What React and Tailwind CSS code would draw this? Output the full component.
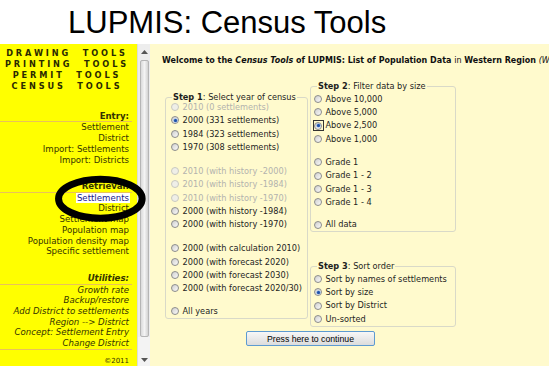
import React from "react";

function Radio({ checked, disabled, focus }) {
  const circle = (
    <span
      className={
        disabled
          ? "relative inline-block w-[8px] h-[8px] rounded-full border border-[#c9c9c0] bg-[#efefe8]"
          : "relative inline-block w-[8px] h-[8px] rounded-full border border-[#8c8c8c] bg-gradient-to-br from-[#cfcfcf] to-[#fbfbfb]"
      }
    >
      {checked && (
        <span className="absolute left-[1.5px] top-[1.5px] w-[3px] h-[3px] rounded-full bg-[#1d4fa8] shadow-[0_0_0_0.6px_#7aa6e0]" />
      )}
    </span>
  );
  if (focus) {
    return (
      <span className="inline-flex items-center justify-center w-[11px] h-[11px] border border-[#333] mr-[2px] -ml-[1.5px]">
        {circle}
      </span>
    );
  }
  return <span className="inline-flex mr-[3.5px]">{circle}</span>;
}

function Row({ label, checked, disabled, focus }) {
  return (
    <div className="flex items-center h-[13.33px] whitespace-nowrap">
      <Radio checked={checked} disabled={disabled} focus={focus} />
      <span className={disabled ? "text-[#b3b3ad]" : "text-[#1e1e1e]"}>{label}</span>
    </div>
  );
}

function Legend({ step, text, className }) {
  return (
    <legend className={"leading-[7px] px-[1px] whitespace-nowrap " + className}>
      <b>Step {step}</b>: {text}
    </legend>
  );
}

export default function App() {
  return (
    <div className="relative w-[549px] h-[366px] overflow-hidden bg-white">
      {/* Header */}
      <div className="h-[44px] bg-white pl-[68px] pt-[6.5px]">
        <div className="font-['Liberation_Sans',Arial,sans-serif] text-[31px] leading-[31px] text-black whitespace-nowrap">
          LUPMIS: Census Tools
        </div>
      </div>

      {/* Body */}
      <div className="flex h-[322px]">
        {/* Sidebar */}
        <div className="w-[137px] bg-[#ffff00] text-[#343400] font-['DejaVu_Sans',Verdana,sans-serif] text-[8.6px] leading-[10.7px]">
          <div className="pt-[3.5px] pr-[3px] text-center font-bold tracking-[2.9px] text-[8.2px] leading-[11.3px] text-[#2a2a00]">
            <div>DRAWING&nbsp; TOOLS</div>
            <div>PRINTING&nbsp; TOOLS</div>
            <div>PERMIT&nbsp; TOOLS</div>
            <div>CENSUS&nbsp; TOOLS</div>
          </div>

          <div className="mt-[18px] text-right">
            <div className="mr-[5px] pr-[3px] font-bold border-b border-[#e9c15a]">Entry:</div>
            <div className="pr-[8px]">Settlement</div>
            <div className="pr-[8px]">District</div>
            <div className="pr-[8px]">Import: Settlements</div>
            <div className="pr-[8px]">Import: Districts</div>
          </div>

          <div className="mt-[15.8px] text-right">
            <div className="mr-[5px] pr-[3px] font-bold border-b border-[#e9c15a]">Retrieval:</div>
            <div className="pr-[7px]">
              <span className="bg-white text-[#1a1a8c] px-[1px]">Settlements</span>
            </div>
            <div className="pr-[8px]">District</div>
            <div className="pr-[8px]">Settlement map</div>
            <div className="pr-[8px]">Population map</div>
            <div className="pr-[8px]">Population density map</div>
            <div className="pr-[8px]">Specific settlement</div>
          </div>

          <div className="mt-[16px] text-right italic">
            <div className="mr-[5px] pr-[3px] font-bold border-b border-[#e9c15a]">Utilities:</div>
            <div className="mr-[5px] pr-[3px] border-b border-[#e9c15a]">
              <div>Growth rate</div>
              <div>Backup/restore</div>
              <div>Add District to settlements</div>
              <div>Region --&gt; District</div>
              <div>Concept: Settlement Entry</div>
              <div>Change District</div>
            </div>
          </div>
          <div className="mt-[7.5px] pr-[8px] text-right text-[7px] leading-[9px]">©2011</div>
        </div>

        {/* Scrollbar */}
        <div className="w-[13px] bg-[#ededed] border-l border-[#dcdcdc] flex flex-col items-center">
          <div className="h-[16px] flex items-center justify-center">
            <svg width="7" height="4" viewBox="0 0 7 4">
              <path d="M0 4 L3.5 0 L7 4 Z" fill="#555" />
            </svg>
          </div>
          <div className="w-[9px] h-[277px] rounded-[2px] border border-[#b5b5b5] bg-gradient-to-r from-[#dadada] via-[#f4f4f4] to-[#d2d2d2]" />
          <div className="flex-1 w-full bg-[#f3f3f3]" />
          <div className="h-[12px] w-full bg-[#f3f3f3] flex items-start justify-center pt-[4px]">
            <svg width="7" height="4" viewBox="0 0 7 4">
              <path d="M0 0 L3.5 4 L7 0 Z" fill="#555" />
            </svg>
          </div>
        </div>

        {/* Main */}
        <div className="flex-1 bg-[#fffacd] overflow-hidden pl-[12px] pt-[12px] font-['DejaVu_Sans',Verdana,sans-serif] text-[8.2px] text-[#1e1e1e]">
          <div className="whitespace-nowrap font-bold text-[8px] leading-[10px] text-[#111]">
            Welcome to the <i>Census Tools</i> of LUPMIS: List of Population Data{" "}
            <span className="font-normal">in</span> Western Region{" "}
            <span className="font-normal italic">(Western)</span>
          </div>

          <div className="mt-[16.5px] ml-[3px] w-[291px]">
            <div className="flex items-start">
              <fieldset className="mt-[11px] w-[143px] border border-[#d9d9c8] rounded-[3px] pl-[5px] pb-0">
                <Legend step="1" text="Select year of census" className="ml-[1px]" />
                <Row label="2010 (0 settlements)" disabled />
                <Row label="2000 (331 settlements)" checked />
                <Row label="1984 (323 settlements)" />
                <Row label="1970 (308 settlements)" />
                <div className="h-[10.67px]" />
                <Row label="2010 (with history -2000)" disabled />
                <Row label="2010 (with history -1984)" disabled />
                <Row label="2010 (with history -1970)" disabled />
                <Row label="2000 (with history -1984)" />
                <Row label="2000 (with history -1970)" />
                <div className="h-[10.67px]" />
                <Row label="2000 (with calculation 2010)" />
                <Row label="2000 (with forecast 2020)" />
                <Row label="2000 (with forecast 2030)" />
                <Row label="2000 (with forecast 2020/30)" />
                <div className="h-[9.7px]" />
                <Row label="All years" />
              </fieldset>

              <div className="ml-[2px] w-[146px]">
                <fieldset className="border border-[#d9d9c8] rounded-[3px] pl-[3px] pt-[2.8px]">
                  <Legend step="2" text="Filter data by size" className="ml-[3px]" />
                  <Row label="Above 10,000" />
                  <Row label="Above 5,000" />
                  <Row label="Above 2,500" checked focus />
                  <Row label="Above 1,000" />
                  <div className="h-[10px]" />
                  <Row label="Grade 1" />
                  <Row label="Grade 1 - 2" />
                  <Row label="Grade 1 - 3" />
                  <Row label="Grade 1 - 4" />
                  <div className="h-[9px]" />
                  <Row label="All data" />
                </fieldset>

                <fieldset className="mt-[31px] border border-[#d9d9c8] rounded-[3px] pl-[3px] pt-[2px] pb-[0.5px]">
                  <Legend step="3" text="Sort order" className="ml-[3px]" />
                  <Row label="Sort by names of settlements" />
                  <Row label="Sort by size" checked />
                  <Row label="Sort by District" />
                  <Row label="Un-sorted" />
                </fieldset>
              </div>
            </div>

            <div className="flex justify-center mt-[4.4px]">
              <button className="w-[129px] h-[14.3px] rounded-[2px] border border-[#5d9bd1] bg-gradient-to-b from-[#f7f7f7] to-[#dcdcdc] font-['Liberation_Sans',Arial,sans-serif] text-[8.7px] leading-[12px] text-black">
                Press here to continue
              </button>
            </div>
          </div>
        </div>
      </div>

      {/* Hand-drawn ellipse annotation */}
      <svg className="absolute left-[50px] top-[170px]" width="102" height="58" viewBox="0 0 102 58">
        <ellipse cx="50.35" cy="28.7" rx="41.8" ry="19.5" fill="none" stroke="#000" strokeWidth="7" />
      </svg>
    </div>
  );
}
